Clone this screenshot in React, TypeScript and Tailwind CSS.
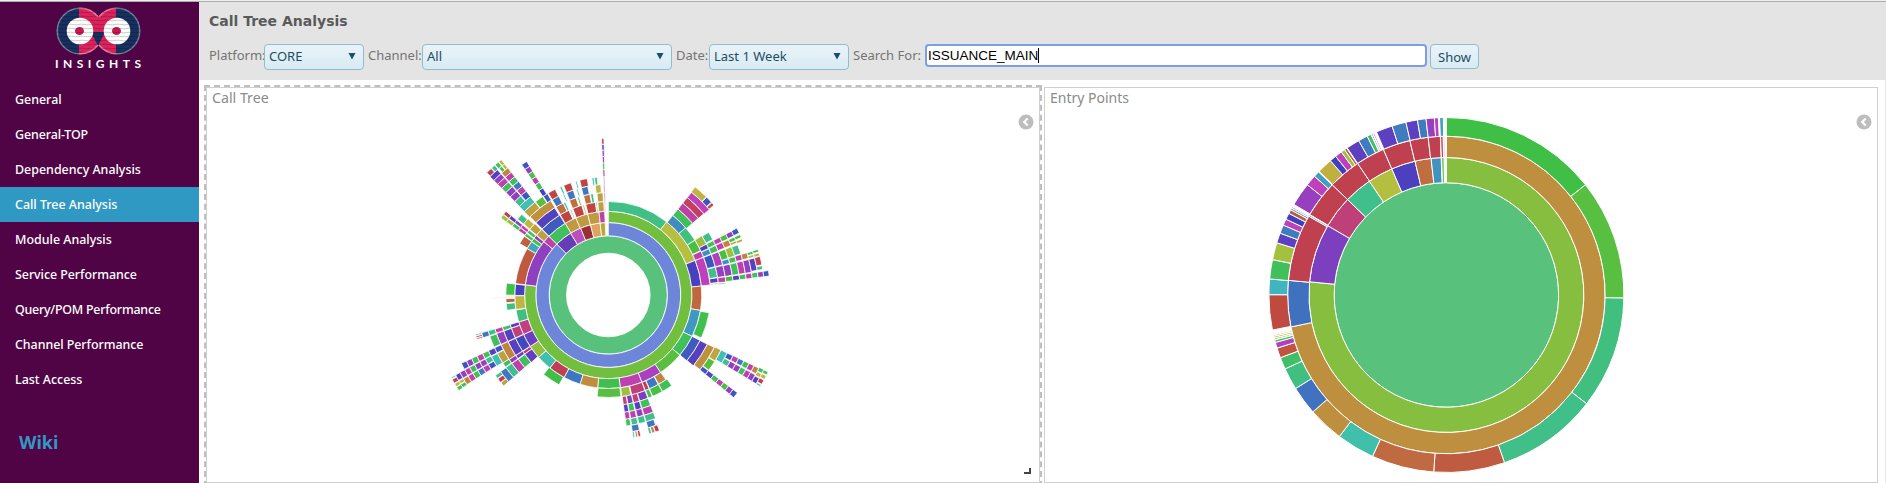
import React from "react";

type Cell = { level: number; from: number; to: number; color: string };

const COLORS: Record<string, string> = {
  g: "#40bf5a", l: "#48bf40", t: "#40bf8c", c: "#40bfb5", b: "#4078bf", n: "#4056bf",
  v: "#5540bf", p: "#9340bf", m: "#bf40ac", k: "#bf4078", r: "#bf4056", d: "#bf4540",
  o: "#bf8440", y: "#bfa040", e: "#bfb540", a: "#9fbf40", i: "#4440bf", u: "#7a40bf",
};

// Each row reads "level from-to color, from-to color, ..." with angles in degrees clockwise from the top.
function parse(rows: string[]): Cell[] {
  return rows.flatMap((row) => {
    const cut = row.indexOf(" ");
    const level = Number(row.slice(0, cut));
    return row.slice(cut + 1).split(", ").map((item) => {
      const [range, color] = item.split(" ");
      const [from, to] = range.split("-").map(Number);
      return { level, from, to, color: COLORS[color] ?? color };
    });
  });
}

// A chain of single cells on consecutive levels that share one angular span.
function chain(first: number, from: number, to: number, colors: string): Cell[] {
  return colors.split("").map((c, i) => ({ level: first + i, from, to, color: COLORS[c] }));
}

const callTree: Cell[] = [
  ...parse([
    "1 0-360 #58c17b",
    "2 0-314.7 #6e86d9, 314.7-328.6 #673cb8, 328.6-337.5 #ba50bd, 337.5-345.8 #9b3032, 345.8-353.5 #dda35f, 353.5-357.6 #b9aa38",
    "3 0-277 #72bf40, 277-309.6 #8f40bf, 309.6-314.7 #bf40a8, 314.7-329 #40bf5a, 329-337.2 #bf9a40, 337.2-345.7 #bf9a40, 345.7-353.6 #bf9a40, 353.6-357.5 m",
    "4 0-38.6 #40bf87, 38.6-68.3 #b7bf40, 68.3-84.5 #4940bf, 84.5-99.5 #bf6840, 99.5-116.3 #4097bf, 116.3-130 #40bf5b, 130-146 #5abf40, 146-159 #a940bf, 159-172.6 #bf40b1, 172.6-186.6 #40bf4e, 186.6-197.6 #bf8c40, 197.6-208.2 #4076bf, 208.2-218.7 #bf4056, 218.7-228.2 #40bfb0, 228.2-236.6 #93bf40, 236.6-245 #6b40bf, 245-253.3 #bf4083, 253.3-260.8 #40bf81, 261-269.5 #bfb540, 269.7-276.7 #4540bf, 277-299.8 #bf5a40, 299.8-304.8 #40a5bf, 304.9-307.4 l, 307.4-309.6 p, 309.8-314.6 y, 314.8-328.7 #405abf, 329-335 d, 335.8-336.6 c, 337.6-343.5 d, 344.1-345 y, 346-352 d, 352.3-353.1 c, 353.5-357.2 y",
    "5 39-49 #408bbf, 49-57.6 #40bf7d, 57.7-64.3 #4bbf40, 64.6-68.3 m, 68.4-84.4 #bf40bb, 100-114.8 #40bf4a, 116.3-130 #405abf, 145.8-150.5 o, 150.8-156.3 b, 156.5-158.8 r, 159-166.8 k, 167.2-172.4 a, 172.9-186.3 #56bf40, 208.7-219.2 #40bf46, 228.8-234.8 #6340bf, 234.8-236.6 k, 236.8-245 #4047bf, 245.2-251.1 k, 251.2-253.3 v, 261.4-265.2 #40bf81, 265.7-267.9 #bf6040, 268.6-269.2 #dba9b0, 269.9-276.7 #40bf49, 300.1-305 #bf6040, 305.2-307 g, 307.5-309.4 g, 309.9-314.2 y, 315-328.4 #5540bf, 329.3-333.8 #bf6f40, 334-335.2 c, 337.6-341.6 #bf6f40, 342.4-343.4 g, 346-349.6 #bf6f40, 350-351.5 t, 353.6-357 y",
    "6 39-49.6 g, 57.6-62.5 a, 62.6-65.1 v, 65.3-68.2 #4090bf, 68.5-75.1 n, 75.4-80.8 t, 81-83.5 v, 83.7-84.4 e, 116.4-129.8 #5540bf, 145-150.6 g, 150.8-156.3 l, 156.6-158.7 g, 159-163.5 u, 163.7-166.8 k, 167-169.8 u, 170-172.2 k, 229-234.5 g, 234.8-236.8 u, 236.9-245 v, 245.2-251 v, 251.2-253.2 g, 268.5-268.75 v, 310-313.6 e, 315-328.6 #bf9040, 329.5-333.4 b, 335.7-336.5 c, 337.8-341.5 b, 343.2-344 c, 345.9-349.3 b, 353.2-356.1 e",
    "7 39-49.6 #bf40a5, 58-62 t, 62.6-64.9 g, 65.2-68.2 g, 68.6-75.2 #b140bf, 75.5-80.9 p, 81.1-83.7 m, 83.9-84.5 t, 116.3-129.2 #bf9040, 159-163.5 g, 163.7-166.7 v, 167-169.8 g, 170-172.2 v, 229-234.6 m, 234.8-237 p, 237-245.1 o, 245.3-251 p, 251.2-253.3 m, 268.3-268.5 t, 309.9-313 t, 314.7-321.7 y, 322-326.3 #5abf40, 326.6-329 n, 329.5-333.3 d, 335.8-336.8 c, 337.8-341.6 d, 343.8-344.6 c, 346-349.7 d, 352-353 c, 353.3-354.6 t",
    "8 39-49.6 #bf4060, 62.6-64.9 m, 65.2-68 m, 68.6-73 #4bbf40, 73.2-75.4 #4090bf, 75.7-81 p, 81.2-83.5 l, 116-121.7 #bfa540, 122-126.8 #56bf40, 159-163.4 m, 163.7-166.6 p, 167-169.7 m, 170-172.2 m, 229-234.7 t, 235-237.2 g, 237.2-242.2 y, 242.5-245.1 n, 245.5-250.8 g, 251.1-253.4 t, 314.8-321.6 #40bfb5",
    "9 39-49.8 #bf40bb, 62.6-64.9 l, 65.3-68 o, 68.6-72.9 a, 73.1-75.4 g, 75.8-81 g, 81.3-83.4 v, 116-121 #40bfb5, 159-163.4 t, 163.6-166.6 t, 167-169.8 t, 170.2-172.2 g, 229-234.6 b, 237.4-242.2 c, 242.5-245.1 v, 251.1-253.4 b, 314.9-318.5 t, 318.8-321.7 n",
    "10 38.8-45 e, 45.2-48 n, 48.3-49.6 d, 62.6-64.8 p, 65.3-66.8 g, 67-68 y, 68.8-72.7 t, 73-75.3 m, 75.8-81 m, 81.3-83.4 g, 116-118.3 n, 118.6-121 t, 160-163.4 b, 167-170 b, 229-230.7 y, 230.9-232.8 r, 233-234.5 t, 251.2-251.9 o, 252-252.7 r, 252.9-253.5 c",
    "11 62.5-64.7 n, 65.3-66.6 l, 67.2-68.2 y, 73-75.3 o, 75.8-81 p, 81.3-83.4 m, 159.3-161 r, 161.2-162.4 o, 162.6-163.6 t, 167-168 r, 168.2-169 o, 169.4-170.1 c",
    "12 73.1-74.2 g, 74.4-75.4 e, 75.8-80.6 v, 81.3-83.3 g",
    "13 73-74 g, 74.4-75.5 e, 75.7-78.9 r, 79.2-80.6 t, 81.3-83.3 p",
    "14 81.3-83.3 n",
    "15 319.2-320.4 g, 320.6-321.6 e",
    "16 115.6-117 g, 117.3-118.6 e, 118.9-121 v, 237.5-238.8 g, 239-240.1 e, 240.3-242.4 v, 315.2-317.2 r, 317.4-318.8 t, 319-320.4 g, 320.6-321.7 e",
    "17 115.7-116.8 g, 117.1-118.4 e, 118.7-120.2 r, 120.5-121.1 c, 237.4-238.7 g, 238.9-240 e, 240.2-241.6 r, 241.9-242.4 c",
  ]),
  ...chain(8, 127.1, 129.3, "nvgmlpn"),
  ...chain(11, 115.9, 118.1, "mbgmo"),
  ...chain(11, 118.5, 121, "ppgmp"),
  ...chain(10, 237.6, 240, "nmbgmo"),
  ...chain(10, 240.2, 242.5, "tppgmp"),
  ...chain(10, 242.7, 245.1, "gmgpn"),
  ...chain(6, 305.6, 307.4, "mgaa"),
  ...chain(6, 307.6, 309.3, "mpvr"),
  ...chain(10, 315, 318.5, "ppgmpv"),
  ...chain(10, 318.8, 321.7, "mbgmo"),
  ...chain(8, 326.4, 328.6, "igmlpn"),
  ...chain(8, 357.5, 358.4, "pgmpvr"),
  ...chain(4, 357.6, 358.2, "pvmp"),
];

const entryPoints: Cell[] = parse([
  "0 0-360 #58c17b",
  "1 0-275.5 #86bf40, 275.5-300.3 #7c40bf, 300.3-314 #bf4078, 314-325.9 #40bf8c, 325.9-336.6 #b4bf40, 336.6-346.8 #4c40bf, 346.8-353.6 #bf6e40, 353.6-357.8 #4093bf, 358-359 #59bf40",
  "2 0-258.4 #bf8f40, 258.4-275.3 #4071bf, 275.3-299.8 #bf404f, 299.8-300.3 #4093bf, 300.5-314 #bf404f, 314-326 #bf404f, 326-336.6 #bf404f, 336.6-346.7 #bf404f, 346.7-353.4 #bf404f, 353.4-357.8 #bf404f, 357.9-358.8 #bf404f, 358.9-359.4 #dc9ba3",
  "3 0-51.6 #40bf46, 51.6-91 #59bf40, 91-127.8 #40bf7e, 127.8-160.9 #41bf88, 160.9-184.1 #bf5b40, 184.1-204.6 #bf6a40, 204.6-217.1 #40bfab, 217.1-228.8 #bf8f40, 228.8-238.2 #4072bf, 238.2-245.4 #40bf81, 245.4-249.3 #40bf66, 249.3-252.6 #bf5540, 252.6-254.5 #b140bf, 254.5-255.3 g, 255.4-255.9 a, 256-256.5 y, 256.6-257 a, 257.1-257.4 e, 258.6-270.1 #bf4a40, 270.1-275.2 #40b4bf, 275.2-281.5 #40bf5b, 281.5-287.1 #a5bf40, 287.1-290.4 #5c40bf, 290.4-293.2 #407bbf, 293.2-295.3 #bf40bb, 295.3-297.4 #4040bf, 297.4-298.7 #bf5b40, 298.7-299.3 #40a0bf, 299.4-299.8 #bf6a40, 300.7-308.4 #963fbf, 308.4-312 #bf40bb, 312-313.9 #40a0bf, 314.2-319.2 #bfb040, 319.2-321.4 #4040bf, 321.4-323.7 #bf40bb, 323.7-325 a, 325-325.8 #bf5b40, 326-330.4 #5c40bf, 330.4-333.5 #407bbf, 333.5-334.8 g, 335-335.4 p, 335.6-336 m, 336.8-342.2 #5c40bf, 342.2-346.8 #407bbf, 346.8-350.6 #5c40bf, 350.6-353.4 #407bbf, 353.4-356.1 #963fbf, 356.1-357.4 #bf40bb, 357.8-359 #40a0bf",
]);

function arc(inner: number, outer: number, from: number, to: number): string {
  if (to - from >= 360) {
    const ring = (r: number, s: number) => `M0 ${-r}A${r} ${r} 0 1 ${s} 0 ${r}A${r} ${r} 0 1 ${s} 0 ${-r}Z`;
    return ring(outer, 1) + (inner > 0 ? ring(inner, 0) : "");
  }
  const at = (r: number, deg: number) => {
    const t = (deg * Math.PI) / 180;
    return `${(r * Math.sin(t)).toFixed(2)} ${(-r * Math.cos(t)).toFixed(2)}`;
  };
  const big = to - from > 180 ? 1 : 0;
  return `M${at(outer, from)}A${outer} ${outer} 0 ${big} 1 ${at(outer, to)}L${at(inner, to)}A${inner} ${inner} 0 ${big} 0 ${at(inner, from)}Z`;
}

function Sunburst({ cells, radius, cx, cy, line }: { cells: Cell[]; radius: (level: number) => number; cx: number; cy: number; line: number }) {
  return (
    <svg width={800} height={370} className="block shrink-0">
      <g transform={`translate(${cx} ${cy})`} stroke="#fff" strokeWidth={line} fillRule="evenodd">
        {cells.map((c, i) => (
          <path key={i} d={arc(radius(c.level), radius(c.level + 1), c.from, c.to)} fill={c.color} />
        ))}
      </g>
    </svg>
  );
}

function Logo() {
  return (
    <svg width="88" height="66" viewBox="0 0 88 66" className="block">
      <defs>
        <clipPath id="owl">
          <circle cx="25" cy="24" r="23.5" />
          <circle cx="62" cy="24" r="23.5" />
        </clipPath>
        <radialGradient id="shade" cx="50%" cy="50%" r="50%">
          <stop offset="0.8" stopColor="#fff" stopOpacity="0" />
          <stop offset="1" stopColor="#fff" stopOpacity="0.5" />
        </radialGradient>
        <pattern id="weave" width="12" height="4" patternUnits="userSpaceOnUse">
          <path d="M0 1.5Q3 .8 6 1.5T12 1.5" fill="none" stroke="#000" strokeOpacity=".22" strokeWidth=".9" />
        </pattern>
      </defs>
      <g clipPath="url(#owl)">
        <rect width="88" height="50" fill="#17305f" />
        <rect x="24" width="37" height="50" fill="#dc215c" />
        <path d="M36 25H50L43 39Z" fill="#17305f" />
        <circle cx="25" cy="24" r="13.3" fill="#fff" />
        <circle cx="62" cy="24" r="13.3" fill="#fff" />
        <ellipse cx="24.5" cy="24" rx="4.5" ry="4" fill="#c8194f" />
        <ellipse cx="61.5" cy="24" rx="4.5" ry="4" fill="#c8194f" />
        <path d="M43.5 9.5A23.5 23.5 0 1 0 43.5 38.5" fill="none" stroke="#fff" strokeOpacity=".4" strokeWidth="3" />
        <path d="M43.5 9.5A23.5 23.5 0 1 1 43.5 38.5" fill="none" stroke="#fff" strokeOpacity=".4" strokeWidth="3" />
        <rect width="88" height="50" fill="url(#weave)" />
      </g>
      <text x="0" y="61" fill="#fff" fontFamily="Lato, sans-serif" fontWeight="700" fontSize="12" textLength="86">INSIGHTS</text>
    </svg>
  );
}

function Select({ value, className }: { value: string; className: string }) {
  return (
    <div className={`flex h-[26px] items-center justify-between rounded border border-[#8fbdd0] bg-linear-to-b from-[#e9f3f9] to-[#d9ebf3] pr-[7px] pl-1 text-[13px] text-[#1c4d63] ${className}`}>
      <span className="-translate-y-px">{value}</span>
      <svg width="8" height="8" className="-translate-y-px"><path d="M.5 1H7.5L4 7.5Z" fill="#175068" /></svg>
    </div>
  );
}

function Collapse({ className }: { className: string }) {
  return (
    <svg width="16" height="16" className={`absolute ${className}`}>
      <circle cx="8" cy="8" r="7.5" fill="#bdbdbd" />
      <path d="M9.7 4.4L6.2 8L9.7 11.6" fill="none" stroke="#fff" strokeWidth="2.2" />
    </svg>
  );
}

const menu = [
  { label: "General", tracking: "" },
  { label: "General-TOP", tracking: "tracking-[-0.1px]" },
  { label: "Dependency Analysis", tracking: "" },
  { label: "Call Tree Analysis", tracking: "" },
  { label: "Module Analysis", tracking: "" },
  { label: "Service Performance", tracking: "tracking-[-0.05px]" },
  { label: "Query/POM Performance", tracking: "tracking-[-0.23px]" },
  { label: "Channel Performance", tracking: "tracking-[-0.05px]" },
  { label: "Last Access", tracking: "" },
];

export default function App() {
  return (
    <div className="flex h-[483px] w-[1886px] flex-col overflow-hidden bg-white font-['Noto_Sans',sans-serif]">
      <div className="h-0.5 shrink-0 border-b border-[#abb0ad] bg-[#eeeeee]" />
      <div className="flex min-h-0 flex-1">
        <nav className="flex w-[199px] shrink-0 flex-col bg-[#500445]">
          <div className="flex h-20 shrink-0 pt-[5px] pl-[55px]"><Logo /></div>
          {menu.map(({ label, tracking }) => (
            <div key={label} className={`flex h-[35px] shrink-0 items-center pt-0.5 pl-[15px] text-[12.45px] font-medium whitespace-nowrap text-white ${tracking} ${label === "Call Tree Analysis" ? "bg-[#3099c3]" : ""}`}>
              {label}
            </div>
          ))}
          <div className="mt-[32px] pl-[19px] text-[18px] leading-[26px] font-bold text-[#3099c3]">Wiki</div>
        </nav>
        <main className="flex min-w-0 flex-1 flex-col">
          <header className="h-[78px] shrink-0 bg-[#e4e4e4] pl-[10px] text-[13px] text-[#747474]">
            <h1 className="pt-2 font-['DejaVu_Sans',sans-serif] text-[14px] leading-[22px] font-bold text-[#5a5a5a]">Call Tree Analysis</h1>
            <div className="mt-3 flex items-start leading-[22px]">
              <span className="w-[55px] shrink-0">Platform:</span>
              <Select value="CORE" className="w-[100px]" />
              <span className="ml-1 w-[54px] shrink-0">Channel:</span>
              <Select value="All" className="w-[250px]" />
              <span className="ml-1 w-[33px] shrink-0">Date:</span>
              <Select value="Last 1 Week" className="w-[140px]" />
              <span className="ml-1 w-[72px] shrink-0 whitespace-nowrap">Search For:</span>
              <div className="flex h-[23px] w-[502px] items-center rounded-sm border-2 border-[#7a9fe4] bg-white pl-px font-['Liberation_Sans',sans-serif] text-[13.5px] text-black">
                <span>ISSUANCE_MAIN</span>
                <span className="h-[15px] w-px bg-black" />
              </div>
              <button className="ml-[3px] h-[25px] w-[49px] rounded border border-[#8fbdd0] bg-linear-to-b from-[#e9f3f9] to-[#d9ebf3] text-[13px] text-[#1c4d63]">Show</button>
            </div>
          </header>
          <div className="flex flex-1 border-r border-[#e8e8e8] pt-[5px] pl-[5px]">
            <section className="h-[402px] w-[838px] shrink-0 border-2 border-dashed border-[#bfbfbf]">
              <div className="relative h-[396px] border border-[#cfcfcf]">
                <h2 className="h-[26px] pl-[5px] text-[14.2px] leading-[20px] text-[#8b8b8b]">Call Tree</h2>
                <Sunburst cells={callTree} radius={(k) => 41.83 * Math.sqrt(k)} cx={401.3} cy={181} line={0.8} />
                <Collapse className="top-[26px] right-[5px]" />
                <svg width="7" height="6" className="absolute right-[8px] bottom-[8px]"><path d="M6 0V5H0" fill="none" stroke="#444" strokeWidth="2" /></svg>
              </div>
            </section>
            <section className="relative mt-0.5 ml-[2px] h-[396px] w-[834px] shrink-0 border border-[#cfcfcf]">
              <h2 className="h-[26px] pl-[5px] text-[14px] leading-[20px] text-[#8b8b8b]">Entry Points</h2>
              <Sunburst cells={entryPoints} radius={(k) => (k === 0 ? 0 : 79.37 * Math.sqrt(k + 1))} cx={401.4} cy={181} line={1} />
              <Collapse className="top-[26px] right-[5px]" />
            </section>
          </div>
        </main>
      </div>
    </div>
  );
}
